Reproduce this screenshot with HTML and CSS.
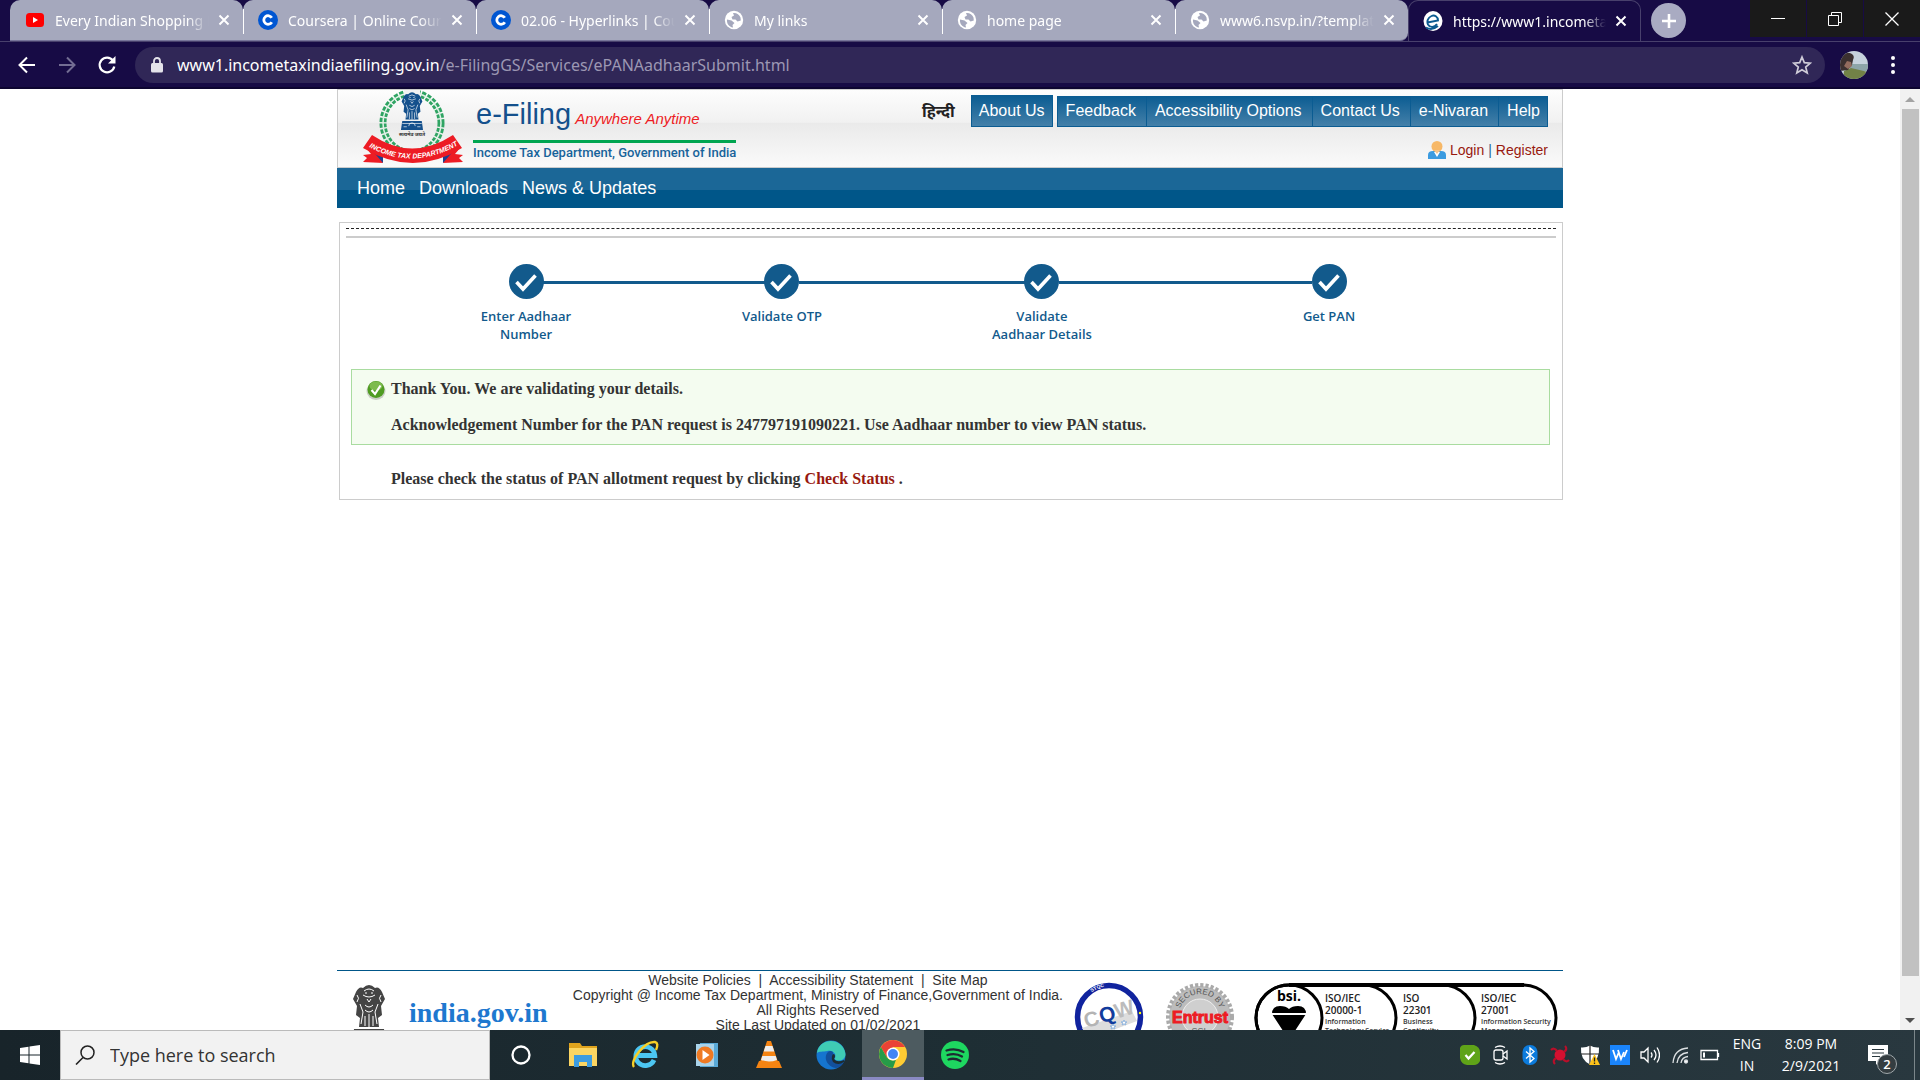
FILE: index.html
```html
<!DOCTYPE html>
<html lang="en">
<head>
<meta charset="utf-8">
<title>e-Filing - Income Tax Department</title>
<link rel="stylesheet" href="styles.css">
</head>
<body>
<svg class="defs" aria-hidden="true">
  <symbol id="close" viewBox="0 0 12 12"><path d="M1.500 1.500l9 9M10.500 1.500l-9 9" stroke="#fff" stroke-width="2" fill="none"/></symbol>
  <symbol id="globe" viewBox="0 0 20 20"><circle cx="10" cy="10" r="9.200" fill="#fff"/><path d="M3 9.500l4.500 1 3 2.500-2 2 .5 2.500C5 17 2.500 13.500 3 9.500zM9 3c3-.6 6.500 1.500 7.500 4.500l.3 3-3.300 1-2-2H8.500l-1-2.500L10 5.500z" fill="#a5a8bd"/></symbol>
  <symbol id="coursera" viewBox="0 0 20 20"><circle cx="10" cy="10" r="10" fill="#0056d2"/><path d="M13.800 7.800A4.300 4.300 0 1 0 13.800 12.200" stroke="#fff" stroke-width="2.800" fill="none"/></symbol>
  <symbol id="tick" viewBox="0 0 35 35"><circle cx="17.500" cy="17.500" r="17.500" fill="#125a8c"/><path d="M7.500 18l6.500 7L26.500 11.500" stroke="#fff" stroke-width="3.600" fill="none"/></symbol>
  <symbol id="lions" viewBox="0 0 40 60">
    <path d="M7 9q3-6 7-4 6-6 12 0 4-2 7 4l3 7-4 7 1 9-4 3 1 9H10l1-9-4-3 1-9-4-7z"/>
    <path d="M5 46h30l2 14H3z"/>
    <g fill="none" stroke="#fff" stroke-width="1"><path d="M15 8q5-4 10 0M14 12q6 4 12 0M16 10h2M22 10h2M18 16l2 3 2-3M8 12q3 3 0 7M32 12q-3 3 0 7M11 21l3 8-2 12M29 21l-3 8 2 12M16 22q4 4 8 0M16 27q4 4 8 0M20 31v13M16 33v10M24 33v10M5 50h30M15 54a5 5 0 0 1 10 0M7 55h5M28 55h5"/></g>
  </symbol>
</svg>

<header class="browser">
  <div class="tabstrip">
    <div class="tab"><svg class="favicon" viewBox="0 0 20 20"><rect x="1" y="3" width="18" height="14" rx="3.500" fill="#f00"/><path d="M8 7l5 3-5 3z" fill="#fff"/></svg><span class="tab-title">Every Indian Shopping M</span><button class="tab-close" aria-label="Close tab"><svg><use href="#close"/></svg></button></div>
    <div class="tab"><svg class="favicon"><use href="#coursera"/></svg><span class="tab-title">Coursera | Online Courses</span><button class="tab-close" aria-label="Close tab"><svg><use href="#close"/></svg></button></div>
    <div class="tab"><svg class="favicon"><use href="#coursera"/></svg><span class="tab-title">02.06 - Hyperlinks | Coursera</span><button class="tab-close" aria-label="Close tab"><svg><use href="#close"/></svg></button></div>
    <div class="tab"><svg class="favicon"><use href="#globe"/></svg><span class="tab-title">My links</span><button class="tab-close" aria-label="Close tab"><svg><use href="#close"/></svg></button></div>
    <div class="tab"><svg class="favicon"><use href="#globe"/></svg><span class="tab-title">home page</span><button class="tab-close" aria-label="Close tab"><svg><use href="#close"/></svg></button></div>
    <div class="tab"><svg class="favicon"><use href="#globe"/></svg><span class="tab-title">www6.nsvp.in/?template</span><button class="tab-close" aria-label="Close tab"><svg><use href="#close"/></svg></button></div>
    <div class="tab active"><svg class="favicon" viewBox="0 0 20 20"><ellipse cx="10" cy="10" rx="9.500" ry="10" fill="#fff"/><path d="M4.500 11.500L15 9.500C15 5.500 11.500 3.500 8.500 5 5 6.500 3.500 10.500 5 13.500c2 3.500 6.500 3 9-.5M3 16.500q6 3.500 12-1.500" stroke="#0c5b90" stroke-width="1.900" fill="none"/></svg><span class="tab-title">https://www1.incometaxindia</span><button class="tab-close" aria-label="Close tab"><svg><use href="#close"/></svg></button></div>
    <button class="new-tab" aria-label="New tab"><svg viewBox="0 0 16 16"><path d="M8 1v14M1 8h14" stroke="#fff" stroke-width="2.600"/></svg></button>
    <div class="window-controls">
      <button aria-label="Minimize"><svg viewBox="0 0 14 14"><path d="M0 6.500h14" stroke="#fff" stroke-width="1"/></svg></button>
      <button aria-label="Restore"><svg viewBox="0 0 14 14"><path d="M.5 3.500h10v10H.5zM3.500 3.500v-3h10v10h-3" stroke="#fff" stroke-width="1" fill="none"/></svg></button>
      <button aria-label="Close"><svg viewBox="0 0 14 14"><path d="M.5.5l13 13M13.500.5l-13 13" stroke="#fff" stroke-width="1.300"/></svg></button>
    </div>
  </div>
  <div class="toolbar">
    <button class="tool" aria-label="Back"><svg viewBox="0 0 20 20"><path d="M18 10H3M10 2.500L2.500 10l7.500 7.500" stroke="#fff" stroke-width="2" fill="none"/></svg></button>
    <button class="tool" aria-label="Forward"><svg viewBox="0 0 20 20"><path d="M2 10h15M10 2.500l7.500 7.500-7.500 7.500" stroke="#736d93" stroke-width="2" fill="none"/></svg></button>
    <button class="tool" aria-label="Reload"><svg viewBox="0 0 20 20"><path d="M16 5.500A7.400 7.400 0 1 0 17.300 11.500" stroke="#fff" stroke-width="2.200" fill="none"/><path d="M18.500 1v7.500H11z" fill="#fff"/></svg></button>
    <div class="omnibox">
      <svg class="lock" viewBox="0 0 12 16"><rect y="6" width="12" height="9.500" rx="1.500" fill="#e4e3ea"/><path d="M3 6.500V4a3 3 0 0 1 6 0v2.500" stroke="#e4e3ea" stroke-width="1.800" fill="none"/></svg>
      <span class="url"><b>www1.incometaxindiaefiling.gov.in</b>/e-FilingGS/Services/ePANAadhaarSubmit.html</span>
      <button class="star" aria-label="Bookmark"><svg viewBox="0 0 20 20"><path d="M10 2l2.300 5.600 6 .5-4.600 3.900 1.500 5.900L10 14.700l-5.200 3.200L6.300 12 1.700 8.100l6-.5z" stroke="#cfccd8" stroke-width="1.700" fill="none"/></svg></button>
    </div>
    <svg class="avatar" viewBox="0 0 28 28"><clipPath id="av"><circle cx="14" cy="14" r="14"/></clipPath><g clip-path="url(#av)"><path d="M0 0h28v28H0z" fill="#c6d2dc"/><path d="M10 13h18v7H10z" fill="#8da5a8"/><path d="M4 20l7-3 17 4v8H3z" fill="#728247"/><path d="M0 8q5-9 12-5 3 2 1 6l-1 5-4 5-8 1z" fill="#3b302f"/><path d="M7 10l4 1 1 4-4 3-4-3z" fill="#936c5e"/></g></svg>
    <button class="menu" aria-label="Menu"><svg viewBox="0 0 6 20"><circle cx="3" cy="3" r="2"/><circle cx="3" cy="10" r="2"/><circle cx="3" cy="17" r="2"/></svg></button>
  </div>
</header>

<div class="viewport">
  <div class="page">
    <header class="site-header">
      <div class="brand">
        <svg class="crest" viewBox="0 0 102 74" role="img" aria-label="Income Tax Department">
          <ellipse cx="50" cy="33" rx="29" ry="30" fill="none" stroke="#2fa463" stroke-width="7" stroke-dasharray="4 1.500"/>
          <ellipse cx="50" cy="33" rx="29" ry="30" fill="none" stroke="#dff2e5" stroke-width="1.500"/>
          <path d="M42 0h16v8H42z" fill="#f2f2f2"/>
          <g fill="#14508c"><use href="#lions" x="35" y="1" width="30" height="39"/></g>
          <text x="50" y="46" class="motto">सत्यमेव जयते</text>
          <path d="M1 65l8-1-5-6 12 1 5 14-20-1 4-4zM101 65l-8-1 5-6-12 1-5 14 20-1-4-4z" fill="#ed1c24"/>
          <path d="M8 58l13 5v10zM94 58l-13 5v10z" fill="#1c3f8f"/>
          <path d="M10 45Q50 72 91 45l9 13Q51 88 1 58z" fill="#ed1c24"/>
          <path id="ribbon" d="M7 57Q51 81 96 55" fill="none"/>
          <text class="ribbon-text"><textPath href="#ribbon" startOffset="50%">INCOME TAX DEPARTMENT</textPath></text>
        </svg>
        <div class="brand-text">
          <p class="brand-name">e-Filing <i>Anywhere Anytime</i></p>
          <p class="brand-dept">Income Tax Department, Government of India</p>
        </div>
      </div>
      <div class="header-side">
        <nav class="top-links">
          <a class="hindi" href="#" lang="hi">हिन्दी</a>
          <a class="pill about" href="#">About Us</a>
          <div class="pills"><a class="pill" href="#">Feedback</a><a class="pill" href="#">Accessibility Options</a><a class="pill" href="#">Contact Us</a><a class="pill" href="#">e-Nivaran</a><a class="pill" href="#">Help</a></div>
        </nav>
        <div class="account">
          <svg viewBox="0 0 18 20"><path d="M0 19v-4q0-4 5-4h8q5 0 5 4v4z" fill="#3b9be0"/><path d="M6 12l3 5 3-5z" fill="#fff"/><circle cx="9" cy="6.500" r="5.500" fill="#f7b867"/><path d="M6 10h6l-3 4z" fill="#f2c48c"/></svg>
          <a href="#">Login</a><span>|</span><a href="#">Register</a>
        </div>
      </div>
    </header>
    <nav class="main-nav"><a href="#">Home</a><a href="#">Downloads</a><a href="#">News &amp; Updates</a></nav>

    <main class="panel">
      <div class="rules"></div>
      <ol class="steps">
        <li class="step"><svg><use href="#tick"/></svg><span>Enter Aadhaar<br>Number</span></li>
        <li class="link link-a" aria-hidden="true"></li>
        <li class="step"><svg><use href="#tick"/></svg><span>Validate OTP</span></li>
        <li class="link link-b" aria-hidden="true"></li>
        <li class="step"><svg><use href="#tick"/></svg><span>Validate<br>Aadhaar Details</span></li>
        <li class="link link-c" aria-hidden="true"></li>
        <li class="step"><svg><use href="#tick"/></svg><span>Get PAN</span></li>
      </ol>
      <div class="notice">
        <svg viewBox="0 0 20 20"><ellipse cx="10" cy="11" rx="9.500" ry="9" fill="#c9cfc4"/><circle cx="10" cy="9.500" r="8.500" fill="#4f9c22"/><ellipse cx="10" cy="6" rx="6.500" ry="4.500" fill="#7dbb4e"/><path d="M5.500 10l3.500 4 5.500-8.500" stroke="#fff" stroke-width="2.200" fill="none"/></svg>
        <div><p>Thank You. We are validating your details.</p><p>Acknowledgement Number for the PAN request is 247797191090221. Use Aadhaar number to view PAN status.</p></div>
      </div>
      <p class="status">Please check the status of PAN allotment request by clicking <a href="#">Check Status</a> .</p>
    </main>

    <footer class="site-footer">
      <svg class="foot-emblem" viewBox="0 0 40 60" fill="#444"><use href="#lions" width="40" height="60"/></svg>
      <div class="india"><strong>india.gov.in</strong><span>national portal of India</span></div>
      <div class="legal">
        <p><a href="#">Website Policies</a>&nbsp; |&nbsp; <a href="#">Accessibility Statement</a>&nbsp; |&nbsp; <a href="#">Site Map</a></p>
        <p>Copyright @ Income Tax Department, Ministry of Finance,Government of India.</p>
        <p>All Rights Reserved</p>
        <p>Site Last Updated on 01/02/2021</p>
      </div>
      <svg class="seal" viewBox="0 0 70 70" role="img" aria-label="CQW">
        <circle cx="35" cy="35" r="31.500" fill="#fff" stroke="#10239e" stroke-width="5.500"/>
        <path d="M8 46l50-17 5 10-48 18z" fill="#ddd"/>
        <g transform="rotate(-17 35 35)" class="cqw"><text x="10" y="39" fill="#b4b4b4">C</text><text x="26" y="39" fill="#123c9c">Q</text><text x="42" y="39" fill="#bcbcbc">W</text></g>
        <path id="cqwarc" d="M12 16A31 31 0 0 1 44 5" fill="none"/><text class="cqw-ring"><textPath href="#cqwarc" startOffset="8">STQC</textPath></text>
        <path d="M39 42l1 2h2l-2 1 1 2-2-1-2 1 1-2-2-1h2zM50 38l1 2h2l-2 1 1 2-2-1-2 1 1-2-2-1h2z" fill="#fff" stroke="#91b6df"/><circle cx="66" cy="31" r="1.200" fill="#ff0"/>
      </svg>
      <svg class="seal seal-entrust" viewBox="0 0 70 70" role="img" aria-label="Secured by Entrust SSL">
        <circle cx="35" cy="35" r="31" fill="#bcbcbc"/><circle cx="35" cy="35" r="32" fill="none" stroke="#aaa" stroke-width="4" stroke-dasharray="3.200 2"/>
        <circle cx="35" cy="35" r="18" fill="#cfcfcf" stroke="#eee"/>
        <path id="entarc" d="M14 33A21 21 0 0 1 56 33" fill="none"/><text class="entrust-ring"><textPath href="#entarc" startOffset="50%">SECURED BY</textPath></text>
        <text x="35" y="41" class="entrust-name">Entrust</text><text x="35" y="52" class="entrust-ssl">SSL</text>
      </svg>
      <svg class="bsi" viewBox="0 0 304 70" role="img" aria-label="bsi certifications">
        <g fill="none" stroke="#000" stroke-width="3"><rect x="2" y="2" width="300" height="66" rx="33"/><circle cx="35" cy="35" r="33"/><path d="M109 2a33 33 0 0 1 0 66M188 2a33 33 0 0 1 0 66"/></g>
        <path d="M35 2h235" stroke="#000" stroke-width="4"/>
        <text x="35" y="18" class="bsi-name">bsi.</text>
        <path d="M18 31q0-8 8-8 6 0 9 3 3-3 9-3 8 0 8 8l-17 26z"/><path d="M17 31h36" stroke="#fff" stroke-width="2"/>
        <g class="iso"><text x="71" y="19">ISO/IEC</text><text x="71" y="31">20000-1</text><text x="149" y="19">ISO</text><text x="149" y="31">22301</text><text x="227" y="19">ISO/IEC</text><text x="227" y="31">27001</text></g>
        <g class="iso-sub"><text x="71" y="41">Information</text><text x="71" y="50">Technology Service</text><text x="149" y="41">Business</text><text x="149" y="50">Continuity</text><text x="227" y="41">Information Security</text><text x="227" y="50">Management</text></g>
      </svg>
    </footer>
  </div>
  <div class="scrollbar" aria-hidden="true">
    <svg viewBox="0 0 20 20"><path d="M5 13h10l-5-5z" fill="#a3a3a3"/></svg>
    <div class="thumb"></div>
    <svg viewBox="0 0 20 20"><path d="M5 8h10l-5 5z" fill="#505050"/></svg>
  </div>
</div>

<div class="taskbar">
  <button class="start" aria-label="Start"><svg viewBox="0 0 20 20" fill="#fff"><path d="M0 3l8.500-1.200v7.700H0zM9.500 1.600L20 0v9.500H9.500zM0 10.500h8.500v7.700L0 17zM9.500 10.500H20V20L9.500 18.400z"/></svg></button>
  <label class="search"><svg viewBox="0 0 20 20"><circle cx="12.500" cy="7.500" r="6.500" fill="none" stroke="#222" stroke-width="1.500"/><path d="M8 12.500L1 19.500" stroke="#222" stroke-width="1.600"/></svg><input type="text" placeholder="Type here to search" aria-label="Search"></label>
  <div class="apps">
    <button aria-label="Cortana"><svg viewBox="0 0 30 30"><circle cx="15" cy="15" r="8.500" fill="none" stroke="#fff" stroke-width="2.300"/></svg></button>
    <button aria-label="File Explorer"><svg viewBox="0 0 30 30"><path d="M1 3h11l2 3h15v20H1z" fill="#dfa31d"/><path d="M1 8h28v18H1z" fill="#fbd562"/><path d="M6 27V15h18v12h-5v-5h-8v5z" fill="#3d9ce0"/></svg></button>
    <button aria-label="Internet Explorer"><svg viewBox="0 0 30 30"><path d="M24 20A9.500 9.500 0 1 1 24.800 15.500H8" stroke="#4cc6f2" stroke-width="4.800" fill="none"/><path d="M4 27C-1 21 15 1 25 2q4 1 1 8" stroke="#f7cf27" stroke-width="2.400" fill="none"/></svg></button>
    <button aria-label="Media Player"><svg viewBox="0 0 30 30"><path d="M8 3h18v24H8z" fill="#5aa9d6"/><path d="M4 4h18v22H4z" fill="#a9d3ea"/><circle cx="13" cy="15" r="8.500" fill="#ef7a23"/><path d="M10.500 10l7 5-7 5z" fill="#fff"/></svg></button>
    <button aria-label="VLC"><svg viewBox="0 0 30 30"><path d="M5 21h20l3 7H2z" fill="#f58412"/><path d="M13 1h4l7 21q-9 5-18 0z" fill="#f58412"/><path d="M11.500 6h7l1.800 5.500h-10.600zM8.300 16h13.400l1.300 4q-8 3-16 0z" fill="#eee"/></svg></button>
    <button aria-label="Edge"><svg viewBox="0 0 30 30"><circle cx="15" cy="15" r="14.500" fill="#1575cf"/><path d="M1 13C3-3 27-3 29.500 14c0 7-8 8-11 5 3-5-2-9-7-8S3 11 1 13z" fill="#3fcbb4"/><path d="M12 12c-5 5-1 15 8 16 4 0 7-4 8-6-5 2-12 1-12-5 0-2 1-2 1-4s-3-3-5-1z" fill="#12509c"/><path d="M16 16q0-2 2-2 2 2 0 5 3 4 10 1v2q-6 4-11 0-2-3-1-6z" fill="#1d2c32"/></svg></button>
    <button class="running" aria-label="Chrome"><svg viewBox="0 0 30 30"><circle cx="15" cy="15" r="14" fill="#fc3"/><path d="M2.900 8A14 14 0 0 1 27.100 8H15L9 18.500z" fill="#ea4335"/><path d="M2.900 8l6 10.500q3 4 9 2.500L15 29A14 14 0 0 1 2.900 8z" fill="#279b48"/><circle cx="15" cy="15" r="6.500" fill="#fff"/><circle cx="15" cy="15" r="5" fill="#4285f4"/></svg></button>
    <button aria-label="Spotify"><svg viewBox="0 0 30 30"><circle cx="15" cy="15" r="14" fill="#1ed760"/><path d="M6.500 10.500q9-3 17 1.500M7.500 15q8-2.500 14.500 1.500M8.500 19.500q6-2 12 1.500" stroke="#1d2c32" stroke-width="2.300" fill="none" stroke-linecap="round"/></svg></button>
  </div>
  <div class="tray">
    <svg viewBox="0 0 20 20"><path d="M4 0h10q6 2 6 7v9q-2 4-6 4H7q-6-1-7-7V3q1-3 4-3z" fill="#5fa318"/><path d="M5.500 10l3 3.500 6-6.500" stroke="#fff" stroke-width="2.300" fill="none"/></svg>
    <svg viewBox="0 0 20 20" fill="none" stroke="#fff" stroke-width="1.300"><rect x="4" y="5" width="9" height="10" rx="2"/><path d="M13 9l4-3v8l-4-3M5 2.500q5-3 10 0M5 17.500q5 3 10 0"/></svg>
    <svg viewBox="0 0 20 20"><rect x="2.500" width="15" height="20" rx="7" fill="#0c7bdc"/><path d="M6 6.500l8 7-4 3.500V3l4 3.500-8 7" stroke="#fff" stroke-width="1.300" fill="none"/></svg>
    <svg viewBox="0 0 20 20"><circle cx="10" cy="10" r="5.500" fill="#d51030"/><g fill="none" stroke="#b80f2a" stroke-width="2.200"><path d="M1 5q3-3 6 1M15 1q3 3-1 6M19 15q-3 3-6-1M5 19q-3-3 1-6"/></g></svg>
    <svg viewBox="0 0 20 20"><path d="M10 .5q4 2.500 9 2 1 12-9 17-10-5-9-17 5 .5 9-2z" fill="#fff"/><path d="M10 0v20M1 9h18" stroke="#222" stroke-width="1.200"/><path d="M14.500 9L20 20H9z" fill="#fcc21b"/><path d="M14.500 12.500v4M14.500 17.500v1.500" stroke="#222" stroke-width="1.300"/></svg>
    <svg viewBox="0 0 20 20"><path d="M0 0h20v20H0z" fill="#1a84fb"/><path d="M3 5l3 9 3-7M8 5l3 9 3-7M14 12l3-7" stroke="#fff" stroke-width="1.800" fill="none"/></svg>
    <svg viewBox="0 0 20 20" fill="none" stroke="#fff" stroke-width="1.300"><path d="M1 7h3l4-4v14l-4-4H1zM11 7.500q2 2.500 0 5M14 5q4 5 0 10M17 2.500q5 7.500 0 15"/></svg>
    <svg viewBox="0 0 20 20" fill="none" stroke="#dde1e3" stroke-width="1.300"><path d="M3 18Q4 4 18 3M7 18Q8 8.500 18 7.500M11 18q1-6 7-6.500"/><circle cx="16" cy="16.500" r="1.500" fill="#fff"/></svg>
    <svg viewBox="0 0 20 20"><path d="M1 5.500h16.500v9H1zM18.500 8v4" stroke="#fff" stroke-width="1.300" fill="none"/><path d="M3 7.500h2v5H3z" fill="#fff"/></svg>
  </div>
  <div class="lang"><span>ENG</span><span>IN</span></div>
  <time class="clock" datetime="2021-02-09T20:09"><span>8:09 PM</span><span>2/9/2021</span></time>
  <button class="alerts" aria-label="Notifications"><svg viewBox="0 0 20 20"><path d="M0 0h20v16h-9l-3 4v-4H0z" fill="#fff"/><path d="M4 4.500h12M4 8h12M4 11.500h8" stroke="#29373d" stroke-width="1.200"/></svg><span class="badge">2</span></button>
</div>
</body>
</html>
```
FILE: styles.css
```css
* { box-sizing: border-box; }
body {
  margin: 0;
  height: 100vh;
  display: flex;
  flex-direction: column;
  overflow: hidden;
  background: #fff;
  font-family: "Liberation Sans", "Noto Sans", sans-serif;
}
button { border: 0; padding: 0; background: none; font: inherit; color: inherit; }
a { color: inherit; text-decoration: none; }
p { margin: 0; }
svg { display: block; flex: none; }
.defs { position: absolute; width: 0; height: 0; }

/* Browser chrome */
.browser {
  flex: none;
  background: #170b45;
  border-bottom: 2px solid #0d0530;
  color: #fff;
  font-family: "Noto Sans", "Open Sans", sans-serif;
}
.tabstrip { display: flex; height: 42px; padding-left: 10px; border-bottom: 1px solid #48406c; }
.tab {
  flex: 0 1 233px;
  min-width: 0;
  display: flex;
  align-items: center;
  gap: 10px;
  padding: 0 13px 0 15px;
  background: linear-gradient(#fff, #fff) 0 9px / 1px 25px no-repeat #a5a8bd;
  border-radius: 10px 10px 0 0;
  border-bottom: 1px solid #77759a;
  font-size: 14px;
}
.tab:first-child { background: #a5a8bd; }
.tab:nth-child(6) { border-bottom-right-radius: 8px; }
.tab.active { background: #170b45; border: 1px solid #48406c; border-bottom: 0; padding-left: 14px; }
.favicon { width: 20px; height: 20px; }
.tab-title {
  flex: 1;
  min-width: 0;
  overflow: hidden;
  white-space: nowrap;
  margin-right: -4px;
  -webkit-mask-image: linear-gradient(90deg, #000 84%, transparent 98%);
  mask-image: linear-gradient(90deg, #000 84%, transparent 98%);
}
.tab-close svg { width: 12px; height: 12px; }
.new-tab {
  flex: none;
  align-self: center;
  display: grid;
  place-items: center;
  width: 35px;
  height: 35px;
  margin-left: 10px;
  border-radius: 50%;
  background: #a9abc2;
}
.new-tab svg { width: 16px; height: 16px; }
.window-controls { display: flex; gap: 1px; height: 37px; margin-left: auto; }
.window-controls button { display: grid; place-items: center; width: 56px; background: #1a1a1a; }
.window-controls svg { width: 14px; height: 14px; }

.toolbar { display: flex; align-items: center; height: 45px; padding: 0 24px 0 17px; }
.tool { margin-right: 20px; }
.tool svg, .star svg { width: 20px; height: 20px; }
.omnibox {
  flex: 1;
  min-width: 0;
  display: flex;
  align-items: center;
  height: 36px;
  margin: 0 15px 0 -2px;
  padding: 0 13px 0 16px;
  border-radius: 18px;
  background: #302757;
}
.lock { width: 12px; height: 16px; }
.url { flex: 1; min-width: 0; overflow: hidden; white-space: nowrap; margin-left: 14px; font-size: 16px; color: #9c97b3; }
.url b { font-weight: 400; color: #fff; }
.avatar { width: 28px; height: 28px; }
.menu { margin-left: 22px; }
.menu svg { width: 6px; height: 20px; fill: #fff; }

/* Site */
.viewport { flex: 1; min-height: 0; display: flex; overflow: hidden; }
.page {
  flex: 1;
  min-width: 0;
  max-width: 1226px;
  margin: 0 auto;
  display: flex;
  flex-direction: column;
}
.site-header {
  flex: none;
  display: flex;
  justify-content: space-between;
  height: 79px;
  padding: 0 14px 0 24px;
  border: 1px solid #ccc;
  background: linear-gradient(#fdfdfd, #f1f1f1 42%, #eaeaea 43%, #fafafa);
}
.brand { display: flex; gap: 9px; }
.crest { width: 102px; height: 74px; }
.motto { font: 700 5px "Noto Sans", sans-serif; text-anchor: middle; fill: #333; }
.ribbon-text { font: italic 700 7px "Liberation Sans", sans-serif; fill: #fff; text-anchor: middle; }
.brand-text { padding-top: 8px; }
.brand-name { padding: 0 0 5px 3px; border-bottom: 3px solid #00a550; font-size: 29px; line-height: 32px; color: #14508c; white-space: nowrap; }
.brand-name i { font-size: 15px; color: #ed1c24; margin-left: -4px; }
.brand-dept { padding-top: 2px; font: 500 13px/16px Roboto, "Liberation Sans", sans-serif; color: #17639a; white-space: nowrap; }
.header-side { display: flex; flex-direction: column; align-items: flex-end; }
.top-links { display: flex; align-items: flex-end; margin-top: 5px; font-size: 16px; color: #fff; white-space: nowrap; }
.hindi { align-self: center; margin-right: 16px; font: 700 16px/20px "Noto Sans", sans-serif; color: #222; }
.pills { display: flex; margin-left: 4px; border-left: 1px solid #0b5c92; }
.pill {
  height: 31px;
  padding: 0 10px 0 8px;
  border: solid #0b5c92;
  border-width: 0 1px 1px 0;
  background: linear-gradient(#0b5c92, #4480a9);
  line-height: 30px;
}
.pills .pill:last-child { padding-right: 7px; }
.about { height: 32px; padding: 0 7px; border-width: 1px; }
.account { display: flex; align-items: center; gap: 4px; margin-top: 13px; font-size: 14px; color: #98190f; }
.account svg { width: 18px; height: 20px; }
.account span { color: #27658f; }

.main-nav {
  flex: none;
  display: flex;
  gap: 14px;
  height: 40px;
  padding-left: 20px;
  background: linear-gradient(#1b6797 54%, #005689 54%);
  font-size: 18px;
  line-height: 41px;
  color: #fff;
}
.panel { margin: 14px 0 auto 2px; padding: 5px 6px 9px; border: 1px solid #ccc; }
.rules { height: 10px; border-top: 1px dashed #222; border-bottom: 2px solid #ccc; }
.steps {
  display: flex;
  height: 105px;
  margin: 26px 167px 0 120px;
  padding: 0;
  list-style: none;
  font: 600 13px/18px "Open Sans", "Noto Sans", sans-serif;
  color: #125a8c;
  text-align: center;
}
.step { flex: none; width: 120px; display: flex; flex-direction: column; align-items: center; gap: 8px; }
.step svg { width: 35px; height: 35px; }
.link { height: 3px; margin: 17px -43px 0; background: #125a8c; }
.link-a { flex: 221 1 0; }
.link-b { flex: 225 1 0; }
.link-c { flex: 252 1 0; }
.notice {
  display: flex;
  gap: 5px;
  margin: 0 6px 0 5px;
  padding: 8px 14px;
  border: 1px solid #a9dca0;
  background: #f4fcf0;
}
.notice svg { width: 20px; height: 20px; margin-top: 2px; }
.notice p, .status { font: 700 16px/22px "Liberation Serif", serif; color: #333; }
.notice p + p { margin-top: 14px; }
.status { margin: 23px 0 0 45px; }
.status a { color: #98190f; }

.site-footer {
  flex: none;
  display: flex;
  height: 60px;
  overflow: hidden;
  border-top: 1px solid #005689;
}
.foot-emblem { width: 40px; height: 60px; margin: 12px 0 0 12px; }
.india { display: flex; flex-direction: column; margin: 27px 0 0 20px; width: 146px; font-family: "Liberation Serif", serif; color: #1e78cf; }
.india strong { font-size: 28px; line-height: 30px; white-space: nowrap; }
.india span { padding-left: 8px; font: 12px/14px "Liberation Sans", sans-serif; white-space: nowrap; }
.legal { flex: 1; padding: 2px 0 0 22px; font-size: 14px; line-height: 15px; color: #333; text-align: center; white-space: nowrap; }
.seal { width: 70px; height: 70px; margin: 11px 0 0 11px; }
.seal-entrust { margin-left: 21px; }
.bsi { width: 304px; height: 70px; margin: 12px 5px 0 19px; }
.cqw { font: 700 21px "Liberation Sans", sans-serif; }
.cqw-ring { font: 700 5px "Liberation Sans", sans-serif; fill: #fff; }
.entrust-ring { font: 8px "Liberation Sans", sans-serif; fill: #555; text-anchor: middle; }
.entrust-name { font: 700 16px "Liberation Sans", sans-serif; fill: #ed1c24; stroke: #ed1c24; text-anchor: middle; }
.entrust-ssl { font: 9px "Liberation Sans", sans-serif; fill: #666; text-anchor: middle; }
.bsi-name { font: 700 14px "Open Sans", sans-serif; text-anchor: middle; }
.iso { font: 600 10px "Open Sans", sans-serif; fill: #222; }
.iso-sub { font: 600 7px "Open Sans", sans-serif; fill: #333; }

.scrollbar { flex: none; width: 20px; display: flex; flex-direction: column; background: #f1f1f1; }
.scrollbar svg { width: 20px; height: 20px; }
.thumb { flex: 0 1 867px; margin: 0 1px auto 2px; background: #c1c1c1; }

/* Taskbar */
.taskbar {
  flex: none;
  display: flex;
  height: 50px;
  background: linear-gradient(90deg, #18242a, #1e2e34 50%, #29383f);
  color: #fff;
  font-family: "Open Sans", "Noto Sans", sans-serif;
}
.start { display: grid; place-items: center; width: 60px; }
.start svg { width: 20px; height: 20px; }
.search { display: flex; align-items: center; gap: 15px; width: 430px; padding-left: 14px; border: 1px solid #bbb; background: #f2f2f2; }
.search svg { width: 20px; height: 20px; }
.search input { flex: 1; min-width: 0; border: 0; padding: 0; background: none; font: 18px "Open Sans", "Noto Sans", sans-serif; }
.search input::placeholder { color: #333; opacity: 1; }
.apps { display: flex; }
.apps button { display: grid; place-items: center; width: 62px; height: 50px; }
.apps svg { width: 30px; height: 30px; }
.apps .running { background: #4d5b60; border-bottom: 3px solid #8a8ac4; }
.tray { display: flex; align-items: center; gap: 10px; margin-left: auto; }
.tray svg { width: 20px; height: 20px; }
.lang, .clock { display: flex; flex-direction: column; justify-content: center; align-items: center; font-size: 14px; line-height: 22px; white-space: nowrap; }
.lang { width: 54px; }
.clock { width: 74px; }
.alerts { position: relative; width: 67px; margin-right: 5px; padding-left: 20px; border-right: 1px solid #7b868a; }
.alerts svg { width: 20px; height: 20px; }
.badge {
  position: absolute;
  left: 29px;
  top: 24px;
  width: 20px;
  height: 20px;
  border: 1px solid #a0a8ab;
  border-radius: 50%;
  background: #343d41;
  font: 600 13px/18px "Open Sans", sans-serif;
  text-align: center;
}
```
